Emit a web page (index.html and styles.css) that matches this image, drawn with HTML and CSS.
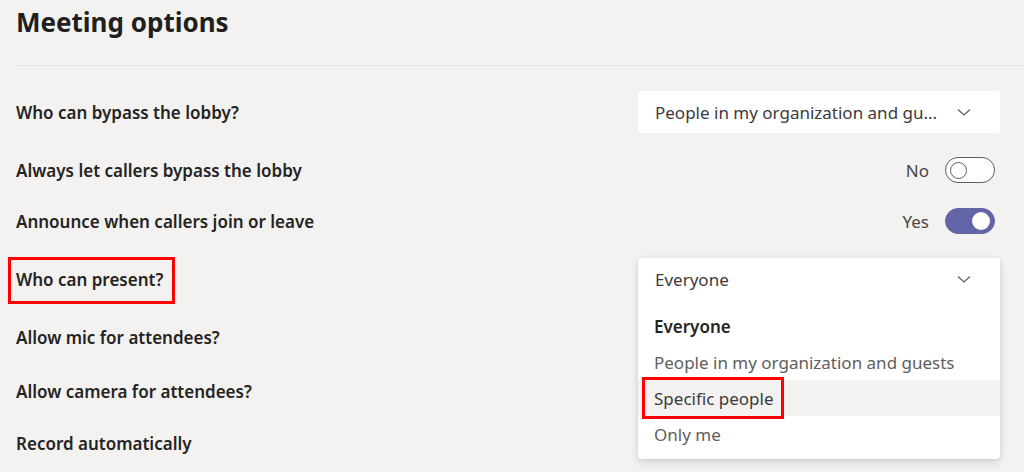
FILE: index.html
```html
<!DOCTYPE html>
<html lang="en">
<head>
<meta charset="utf-8">
<title>Meeting options</title>
<link rel="stylesheet" href="styles.css">
</head>
<body>
<main class="page">
  <h1 class="title">Meeting options</h1>
  <div class="divider"></div>
  <div class="options">
    <div class="row row-dd">
      <div class="label">Who can bypass the lobby?</div>
      <div class="control">
        <div class="select">
          <span class="select-text">People in my organization and gu...</span>
          <svg class="chev" width="16" height="16" viewBox="0 0 16 16"><path d="M2 5.5 L8 11 L14 5.5" fill="none" stroke="#605e5c" stroke-width="1.2"/></svg>
        </div>
      </div>
    </div>
    <div class="row row-tg">
      <div class="label">Always let callers bypass the lobby</div>
      <div class="control control-toggle">
        <span class="state">No</span>
        <span class="toggle"><span class="knob"></span></span>
      </div>
    </div>
    <div class="row row-tg row-nudge-1">
      <div class="label">Announce when callers join or leave</div>
      <div class="control control-toggle">
        <span class="state">Yes</span>
        <span class="toggle on"><span class="knob"></span></span>
      </div>
    </div>
    <div class="row row-dd">
      <div class="label"><span class="mark">Who can present?</span></div>
      <div class="control">
        <div class="dropdown">
          <div class="select open">
            <span class="select-text">Everyone</span>
            <svg class="chev" width="16" height="16" viewBox="0 0 16 16"><path d="M2 5.5 L8 11 L14 5.5" fill="none" stroke="#605e5c" stroke-width="1.2"/></svg>
          </div>
          <ul class="menu">
            <li class="item selected">Everyone</li>
            <li class="item">People in my organization and guests</li>
            <li class="item hover"><span class="mark mark-item">Specific people</span></li>
            <li class="item">Only me</li>
          </ul>
        </div>
      </div>
    </div>
    <div class="row row-tg">
      <div class="label">Allow mic for attendees?</div>
      <div class="control control-toggle">
        <span class="state">Yes</span>
        <span class="toggle on"><span class="knob"></span></span>
      </div>
    </div>
    <div class="row row-tg row-nudge-4">
      <div class="label">Allow camera for attendees?</div>
      <div class="control control-toggle">
        <span class="state">Yes</span>
        <span class="toggle on"><span class="knob"></span></span>
      </div>
    </div>
    <div class="row row-tg row-nudge-2">
      <div class="label">Record automatically</div>
      <div class="control control-toggle">
        <span class="state">No</span>
        <span class="toggle"><span class="knob"></span></span>
      </div>
    </div>
  </div>
</main>
</body>
</html>
```

FILE: styles.css
```css
* { box-sizing: border-box; }
html, body { margin: 0; padding: 0; }
body {
  background: #f3f2f1;
  color: #252423;
  font-family: "Noto Sans", "Open Sans", sans-serif;
  overflow: hidden;
  height: 472px;
}
.page {
  padding: 0 24px 0 16px;
}
.title {
  margin: 0;
  padding-top: 3px;
  font-size: 26px;
  line-height: 38px;
  font-weight: 700;
  color: #201f1e;
}
.divider {
  height: 1px;
  background: #e6e4e2;
  margin-top: 24px;
  margin-right: -24px;
}
.options {
  display: flex;
  flex-direction: column;
  gap: 24px;
  padding-top: 25px;
}
.row {
  display: flex;
  align-items: center;
  justify-content: space-between;
}
.row-dd { height: 42px; }
.row-tg { height: 26px; }
.row-nudge-1 { margin-top: 1px; }
.row-nudge-2 { margin-top: 2px; }
.row-nudge-4 { margin-top: 4px; }
.label {
  font-size: 17px;
  font-weight: 600;
  color: #252423;
}
.control {
  width: 362px;
  height: 100%;
  position: relative;
}
.control-toggle {
  display: flex;
  align-items: center;
  justify-content: flex-end;
  gap: 16px;
  padding-right: 5px;
}
.state {
  font-size: 17px;
  color: #484644;
}
.toggle {
  width: 50px;
  height: 26px;
  border-radius: 13px;
  border: 1px solid #605e5c;
  background: #fff;
  display: flex;
  align-items: center;
  padding: 0 4px;
}
.toggle .knob {
  width: 17px;
  height: 17px;
  border-radius: 50%;
  border: 1px solid #605e5c;
  background: #fff;
}
.toggle.on {
  background: #6264a7;
  border-color: #6264a7;
  justify-content: flex-end;
}
.toggle.on .knob { border: none; width: 18px; height: 18px; }
.select {
  height: 42px;
  background: #fff;
  border-radius: 4px;
  display: flex;
  align-items: center;
  justify-content: space-between;
  padding: 0 28px 0 17px;
  font-size: 17px;
  color: #3b3a39;
}
.select-text {
  white-space: nowrap;
}
.chev { flex: none; }
.dropdown {
  position: absolute;
  top: 0;
  left: 0;
  right: 0;
  background: #fff;
  border-radius: 4px;
  box-shadow: 0 3px 10px rgba(0,0,0,0.13), 0 1px 3px rgba(0,0,0,0.08);
  z-index: 2;
}
.menu {
  list-style: none;
  margin: 0;
  padding: 8px 0 7px;
}
.item {
  height: 36px;
  display: flex;
  align-items: center;
  padding: 0 16px;
  font-size: 17px;
  color: #605e5c;
}
.item.selected {
  font-weight: 600;
  color: #252423;
}
.item.hover {
  background: #f3f2f1;
  color: #3b3a39;
}
.mark {
  position: relative;
}
.mark::after {
  content: "";
  position: absolute;
  top: -11px;
  bottom: -13px;
  left: -8px;
  right: -12px;
  border: 3px solid #f00;
}
.mark-item::after {
  top: -10px;
  bottom: -9px;
  left: -12px;
  right: -10px;
}
```
